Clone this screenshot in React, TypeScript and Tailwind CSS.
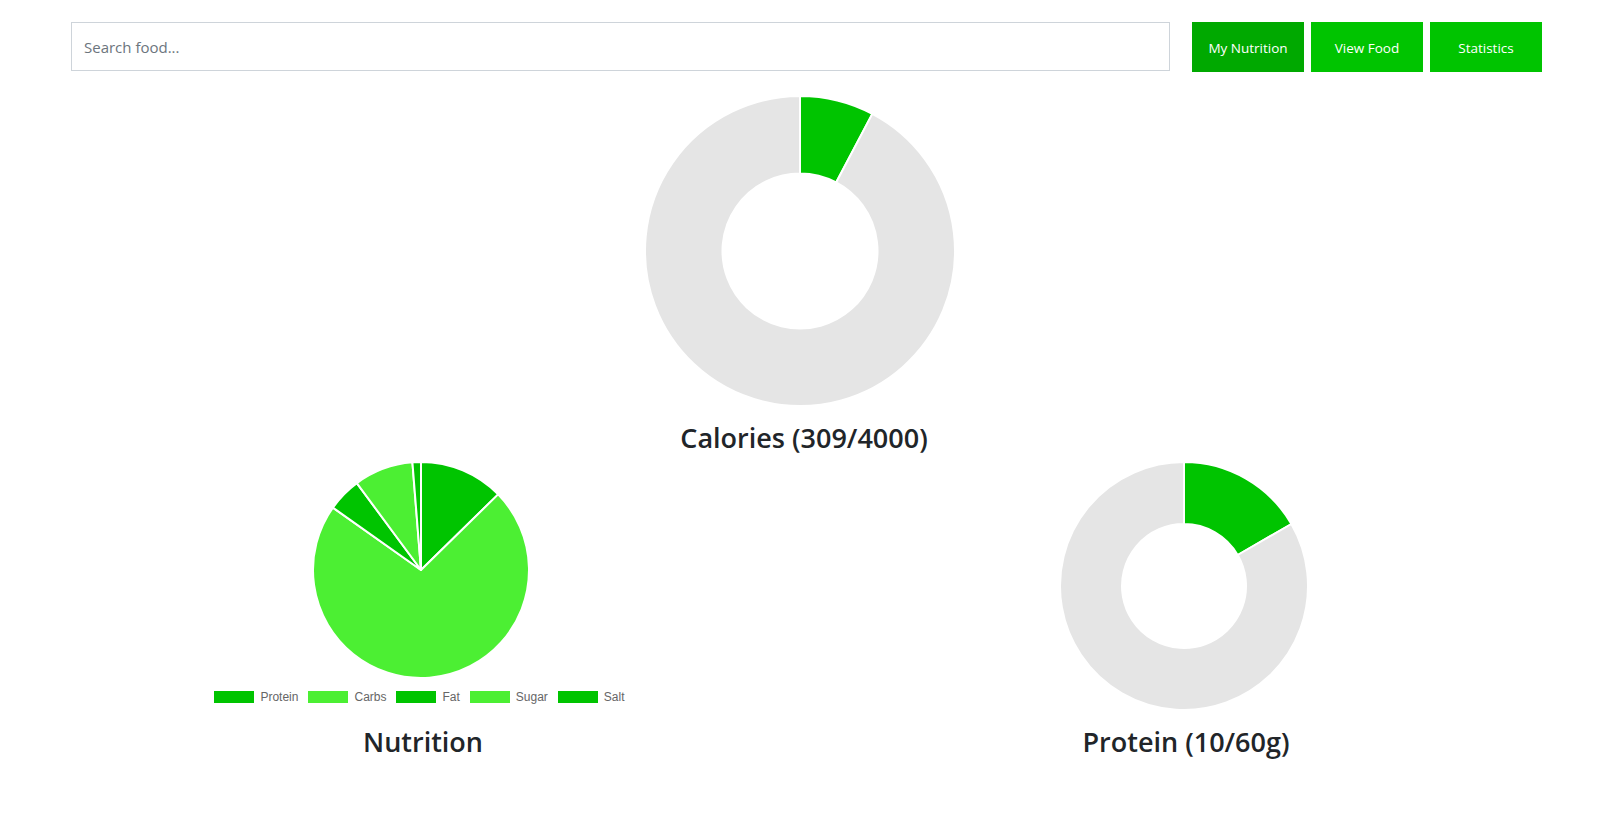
import React from "react";

type Slice = { value: number; color: string };

const pt = (cx: number, cy: number, r: number, deg: number) => {
  const a = (deg * Math.PI) / 180;
  return [cx + r * Math.sin(a), cy - r * Math.cos(a)];
};

// arc path from a0 to a1 (degrees clockwise from 12 o'clock)
const arcPath = (
  cx: number,
  cy: number,
  r: number,
  inner: number,
  a0: number,
  a1: number
) => {
  const large = a1 - a0 > 180 ? 1 : 0;
  const [x0, y0] = pt(cx, cy, r, a0);
  const [x1, y1] = pt(cx, cy, r, a1);
  if (inner <= 0) {
    return `M ${cx} ${cy} L ${x0} ${y0} A ${r} ${r} 0 ${large} 1 ${x1} ${y1} Z`;
  }
  const [x2, y2] = pt(cx, cy, inner, a1);
  const [x3, y3] = pt(cx, cy, inner, a0);
  return `M ${x0} ${y0} A ${r} ${r} 0 ${large} 1 ${x1} ${y1} L ${x2} ${y2} A ${inner} ${inner} 0 ${large} 0 ${x3} ${y3} Z`;
};

const PieChart = ({
  size,
  cutout,
  slices,
}: {
  size: number;
  cutout: number;
  slices: Slice[];
}) => {
  const total = slices.reduce((s, x) => s + x.value, 0);
  const c = size / 2;
  let start = 0;
  return (
    <svg width={size} height={size} viewBox={`0 0 ${size} ${size}`}>
      {slices.map((s, i) => {
        const end = start + (s.value / total) * 360;
        const d = arcPath(c, c, c - 1, (c - 1) * cutout, start, end);
        start = end;
        return (
          <path
            key={i}
            d={d}
            fill={s.color}
            stroke="#ffffff"
            strokeWidth={2}
            strokeLinejoin="round"
          />
        );
      })}
    </svg>
  );
};

const DARK = "#00c400";
const LIGHT = "#4cef33";
const GRAY = "#e5e5e5";

const legend = [
  { label: "Protein", color: DARK },
  { label: "Carbs", color: LIGHT },
  { label: "Fat", color: DARK },
  { label: "Sugar", color: LIGHT },
  { label: "Salt", color: DARK },
];

const Title = ({ children }: { children: React.ReactNode }) => (
  <h3 className="text-[27px] leading-[1.25] font-semibold text-[#212529] text-center whitespace-nowrap">
    {children}
  </h3>
);

export default function App() {
  return (
    <div
      className="min-h-[838px] bg-white pl-[71px] pr-[78px] pt-[22px]"
      style={{ fontFamily: '"Segoe UI", "Open Sans", "Noto Sans", sans-serif' }}
    >
      {/* header */}
      <div className="flex flex-row items-start">
        <input
          placeholder="Search food..."
          className="w-[1099px] h-[49px] border border-[#ced4da] px-3 text-[15px] text-[#495057] placeholder:text-[#6c757d] outline-none"
        />
        <div className="flex flex-row gap-[7px] ml-[22px]">
          <button className="w-[112px] h-[50px] pt-[2px] bg-[#00a900] text-white text-[13.5px]">
            My Nutrition
          </button>
          <button className="w-[112px] h-[50px] pt-[2px] bg-[#00c400] text-white text-[13.5px]">
            View Food
          </button>
          <button className="w-[112px] h-[50px] pt-[2px] bg-[#00c400] text-white text-[13.5px]">
            Statistics
          </button>
        </div>
      </div>

      {/* calories */}
      <div className="w-[310px] ml-[574px] mt-[23px] flex flex-col items-center">
        <PieChart
          size={312}
          cutout={0.5}
          slices={[
            { value: 309, color: DARK },
            { value: 4000 - 309, color: GRAY },
          ]}
        />
        <div className="mt-[14px] ml-[8px]">
          <Title>Calories (309/4000)</Title>
        </div>
      </div>

      {/* bottom row */}
      <div className="flex flex-row mt-[6px]">
        <div className="w-[700px] flex flex-col items-center">
          <PieChart
            size={218}
            cutout={0}
            slices={[
              { value: 10, color: DARK },
              { value: 57, color: LIGHT },
              { value: 4, color: DARK },
              { value: 7, color: LIGHT },
              { value: 1, color: DARK },
            ]}
          />
          <div
            className="flex flex-row items-center gap-[10px] mt-[9px] -ml-[3px] text-[12px] text-[#666666]"
            style={{ fontFamily: '"Liberation Sans", Arial, sans-serif' }}
          >
            {legend.map((l) => (
              <div key={l.label} className="flex flex-row items-center gap-[6px]">
                <div
                  className="w-10 h-3"
                  style={{ backgroundColor: l.color }}
                />
                <span>{l.label}</span>
              </div>
            ))}
          </div>
          <div className="mt-[19px] ml-[4px]">
            <Title>Nutrition</Title>
          </div>
        </div>
        <div className="w-[300px] ml-[263px] flex flex-col items-center">
          <PieChart
            size={250}
            cutout={0.5}
            slices={[
              { value: 10, color: DARK },
              { value: 50, color: GRAY },
            ]}
          />
          <div className="mt-[14px] ml-[4px]">
            <Title>Protein (10/60g)</Title>
          </div>
        </div>
      </div>
    </div>
  );
}
